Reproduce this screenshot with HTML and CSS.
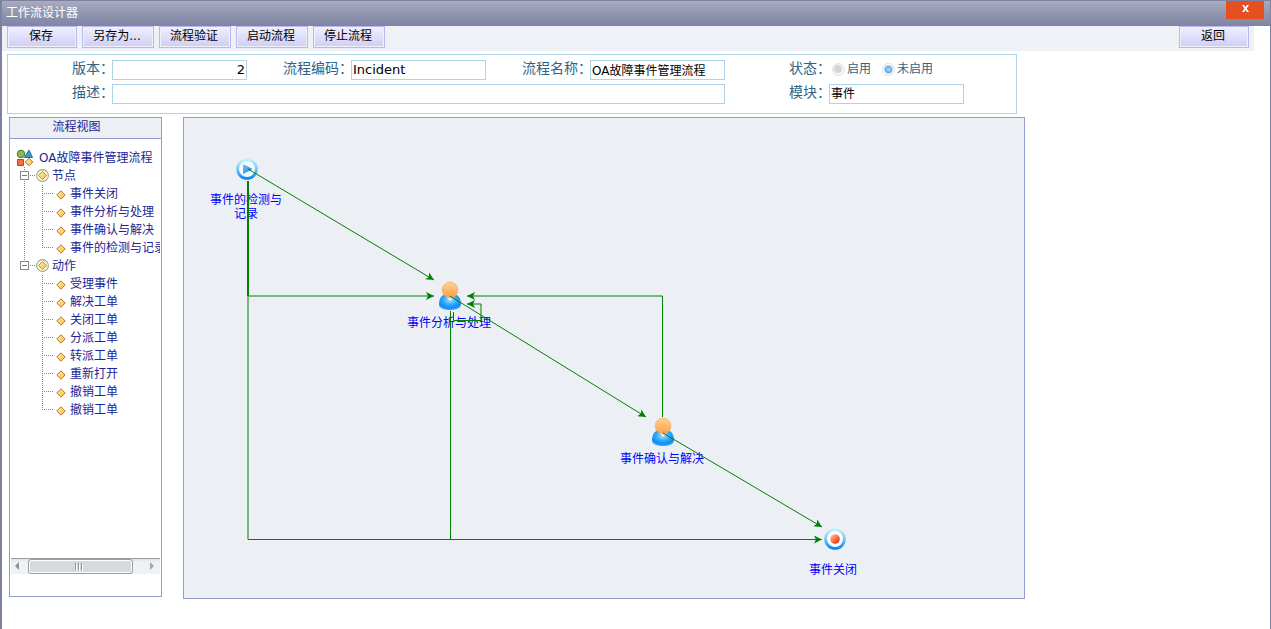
FILE: index.html
```html
<!DOCTYPE html>
<html lang="zh-CN">
<head>
<meta charset="utf-8">
<title>工作流设计器</title>
<link rel="stylesheet" href="styles.css">
</head>
<body>
<svg class="defs" aria-hidden="true">
  <defs>
    <linearGradient id="gold" x1="0" y1="0" x2="1" y2="1"><stop offset="0" stop-color="#fff0a0"/><stop offset="1" stop-color="#f8bc44"/></linearGradient>
    <linearGradient id="ring" x1="0" y1="0" x2="0" y2="1"><stop offset="0" stop-color="#c4f0fd"/><stop offset="0.5" stop-color="#74c8f8"/><stop offset="1" stop-color="#0a86f2"/></linearGradient>
    <linearGradient id="play" x1="0" y1="0" x2="1" y2="1"><stop offset="0" stop-color="#7cc8f8"/><stop offset="1" stop-color="#1378dc"/></linearGradient>
    <linearGradient id="head" x1="0" y1="0" x2="0" y2="1"><stop offset="0" stop-color="#ffd294"/><stop offset="1" stop-color="#fca044"/></linearGradient>
    <radialGradient id="torso" cx=".5" cy=".35" r=".7"><stop offset="0" stop-color="#a4dcfc"/><stop offset="0.45" stop-color="#34a8fb"/><stop offset="0.75" stop-color="#0a8cf8"/><stop offset="1" stop-color="#5cbcf8"/></radialGradient>
    <linearGradient id="stop" x1="0" y1="0" x2="1" y2="1"><stop offset="0.2" stop-color="#ffab8c"/><stop offset="0.8" stop-color="#f23c0c"/></linearGradient>
    <symbol id="i-leaf" viewBox="0 0 10 10"><path d="M5 .8 9.200 5 5 9.200.8 5Z" fill="url(#gold)" stroke="#b87434"/></symbol>
    <symbol id="i-group" viewBox="0 0 12 12"><circle cx="6" cy="6" r="5.4" fill="#fffbe0" stroke="#a3a383"/><path d="M6 2.300 9.700 6 6 9.700 2.300 6Z" fill="url(#gold)" stroke="#c07a34" stroke-width=".8"/></symbol>
    <symbol id="i-user" viewBox="0 0 24 30"><path d="M1 24c0-6 2-9 5-10.500h12c3 1.500 5 4.500 5 10.500 0 3-5 5-11 5S1 27 1 24Z" fill="url(#torso)"/><path d="M8.500 16h7L12 20Z" fill="#e8f7ff"/><circle cx="12" cy="9" r="7.900" fill="url(#head)" stroke="#f0ac64" stroke-width=".7"/></symbol>
    <symbol id="i-start" viewBox="0 0 22 22"><circle cx="11" cy="11" r="9.4" fill="#f0faff" stroke="url(#ring)" stroke-width="2.8"/><path d="M7 7.200Q7 6 8.200 6.600l7.400 3.800q1 .6 0 1.200l-7.400 3.900Q7 16 7 14.800Z" fill="url(#play)"/></symbol>
    <symbol id="i-end" viewBox="0 0 22 22"><circle cx="11" cy="11" r="9.4" fill="#f8fcff" stroke="url(#ring)" stroke-width="2.8"/><circle cx="11" cy="11" r="4.8" fill="url(#stop)"/></symbol>
  </defs>
</svg>
<div class="window">
  <header class="titlebar">
    <h1 class="title">工作流设计器</h1>
    <button class="close" type="button" aria-label="关闭"><svg width="7" height="7" viewBox="0 0 7 7"><path d="M0 0h2l1.500 2L5 0h2L4.600 3.500 7 7H5L3.500 5 2 7H0l2.400-3.500Z" fill="#fff"/></svg></button>
  </header>
  <nav class="toolbar">
    <button class="btn btn-short" type="button">保存</button>
    <button class="btn" type="button">另存为...</button>
    <button class="btn" type="button">流程验证</button>
    <button class="btn" type="button">启动流程</button>
    <button class="btn" type="button">停止流程</button>
    <button class="btn btn-short btn-back" type="button">返回</button>
  </nav>
  <form class="form">
    <label class="label" for="version">版本：</label>
    <input class="field num latin" id="version" type="text" value="2">
    <label class="label" for="code">流程编码：</label>
    <input class="field latin" id="code" type="text" value="Incident">
    <label class="label" for="name">流程名称：</label>
    <input class="field name" id="name" type="text" value="OA故障事件管理流程">
    <span class="label" id="state">状态：</span>
    <div class="radios" role="radiogroup" aria-labelledby="state">
      <label class="choice"><input class="radio" type="radio" name="state">启用</label>
      <label class="choice"><input class="radio" type="radio" name="state" checked>未启用</label>
    </div>
    <label class="label" for="desc">描述：</label>
    <input class="field wide" id="desc" type="text">
    <label class="label" for="module">模块：</label>
    <input class="field high" id="module" type="text" value="事件">
  </form>
  <main class="work">
    <aside class="panel">
      <h2 class="panel-title">流程视图</h2>
      <div class="tree">
        <a class="root" href="#"><svg class="root-icon" viewBox="0 0 18 18"><circle cx="5" cy="5" r="3.800" fill="#8cb84c" stroke="#467c34"/><path d="M13 1 16.500 8.500h-8Z" fill="#3a9cc4" stroke="#2c6ca0"/><path d="M1.500 10.500h6v6h-6Z" fill="#fc6c3c" stroke="#c83c20"/><path d="M13 9.200 16.800 13 13 16.800 9.200 13Z" fill="url(#gold)" stroke="#b87434"/></svg>OA故障事件管理流程</a>
        <ul class="groups">
          <li class="group">
            <div class="group-row"><button class="toggle" type="button" aria-label="折叠节点"></button><svg class="group-icon"><use href="#i-group"/></svg><a href="#">节点</a></div>
            <ul class="leaves">
              <li class="leaf"><svg class="leaf-icon"><use href="#i-leaf"/></svg><a href="#">事件关闭</a></li>
              <li class="leaf"><svg class="leaf-icon"><use href="#i-leaf"/></svg><a href="#">事件分析与处理</a></li>
              <li class="leaf"><svg class="leaf-icon"><use href="#i-leaf"/></svg><a href="#">事件确认与解决</a></li>
              <li class="leaf"><svg class="leaf-icon"><use href="#i-leaf"/></svg><a href="#">事件的检测与记录</a></li>
            </ul>
          </li>
          <li class="group">
            <div class="group-row"><button class="toggle" type="button" aria-label="折叠动作"></button><svg class="group-icon"><use href="#i-group"/></svg><a href="#">动作</a></div>
            <ul class="leaves">
              <li class="leaf"><svg class="leaf-icon"><use href="#i-leaf"/></svg><a href="#">受理事件</a></li>
              <li class="leaf"><svg class="leaf-icon"><use href="#i-leaf"/></svg><a href="#">解决工单</a></li>
              <li class="leaf"><svg class="leaf-icon"><use href="#i-leaf"/></svg><a href="#">关闭工单</a></li>
              <li class="leaf"><svg class="leaf-icon"><use href="#i-leaf"/></svg><a href="#">分派工单</a></li>
              <li class="leaf"><svg class="leaf-icon"><use href="#i-leaf"/></svg><a href="#">转派工单</a></li>
              <li class="leaf"><svg class="leaf-icon"><use href="#i-leaf"/></svg><a href="#">重新打开</a></li>
              <li class="leaf"><svg class="leaf-icon"><use href="#i-leaf"/></svg><a href="#">撤销工单</a></li>
              <li class="leaf"><svg class="leaf-icon"><use href="#i-leaf"/></svg><a href="#">撤销工单</a></li>
            </ul>
          </li>
        </ul>
      </div>
      <div class="scroll">
        <svg width="17" height="12" viewBox="0 0 17 12"><path d="M8 1v8L4 5Z" fill="#8c9096"/></svg>
        <div class="thumb"><svg width="9" height="8" viewBox="0 0 9 8"><path d="M.5 0v7M3.500 0v7M6.500 0v7" stroke="#90949a"/><path d="M1.500 1v7M4.500 1v7M7.500 1v7" stroke="#fff"/></svg></div>
        <svg class="scroll-right" width="17" height="12" viewBox="0 0 17 12"><path d="M7 1v8l4-4Z" fill="#a4a8ae"/></svg>
      </div>
    </aside>
    <section class="canvas">
      <div class="node node-start"><svg class="round"><use href="#i-start"/></svg><span class="node-name">事件的检测与记录</span></div>
      <div class="node node-handle"><svg class="user"><use href="#i-user"/></svg><span class="node-name">事件分析与处理</span></div>
      <div class="node node-confirm"><svg class="user"><use href="#i-user"/></svg><span class="node-name">事件确认与解决</span></div>
      <div class="node node-end"><svg class="round"><use href="#i-end"/></svg><span class="node-name">事件关闭</span></div>
      <svg class="wires" viewBox="184 118 840 480">
        <defs><marker id="arrow" markerWidth="9" markerHeight="8" refX="8" refY="4" orient="auto" markerUnits="userSpaceOnUse"><path d="M0 0 8 4 0 8 2 4Z" fill="#008000"/></marker></defs>
        <g fill="none" stroke="#008000">
          <path d="M248 169 434 280" marker-end="url(#arrow)"/>
          <path d="M248.500 181V296H434" marker-end="url(#arrow)"/>
          <path d="M247.500 181V296"/>
          <path d="M248 296V539.500H822" marker-end="url(#arrow)"/>
          <path d="M450 296 646 417" marker-end="url(#arrow)"/>
          <path d="M662.500 417V296H467" marker-end="url(#arrow)"/>
          <path d="M453.500 312V320.500H481V304H467" marker-end="url(#arrow)"/>
          <path d="M450.500 311V539.500"/>
          <path d="M663 433 822 527" marker-end="url(#arrow)"/>
        </g>
      </svg>
    </section>
  </main>
</div>
</body>
</html>
```
FILE: styles.css
```css
* { box-sizing: border-box; }

body {
  margin: 0;
  background: #fff;
  color: #000;
  font: 12px/18px "DejaVu Sans", "Noto Sans CJK SC", sans-serif;
}

button, input { font: inherit; color: inherit; }
ul { margin: 0; padding: 0; list-style: none; }
a { color: inherit; text-decoration: none; }
h1, h2 { margin: 0; font-size: 12px; font-weight: 400; }

.defs { position: absolute; width: 0; height: 0; }

.window {
  min-height: 100vh;
  border: 1px solid #7d82a3;
  border-left-width: 2px;
  border-bottom: 0;
}

.titlebar {
  display: flex;
  justify-content: space-between;
  align-items: flex-start;
  height: 25px;
  padding: 0 6px 0 4px;
  background: linear-gradient(#a9abbf, #9096ad 50%, #7f84a5);
}
.title { color: #fff; line-height: 24px; }
.close {
  display: flex;
  justify-content: center;
  width: 38px;
  height: 18px;
  padding: 4px 0 0;
  border: 0;
  background: #e64f20;
}

.toolbar {
  display: flex;
  gap: 5px;
  align-items: flex-start;
  height: 25px;
  margin-right: 16px;
  padding: 0 5px;
  background: #eef2f7;
}
.btn {
  width: 72px;
  height: 22px;
  padding: 0 2px 2px 0;
  border: 1px solid #b9b7ec;
  box-shadow: inset 0 0 0 1px #f1f1fb;
  background: linear-gradient(#eff0fb, #cfcdf6);
  line-height: 18px;
}
.btn-short { width: 70px; }
.btn-back { margin-left: auto; }

.form {
  display: grid;
  grid-template-columns: repeat(4, 104px 135px);
  gap: 4px 0;
  max-width: 1010px;
  margin: 3px 5px 0;
  padding: 5px 0 9px;
  border: 1px solid #aed2e6;
}
.label {
  justify-self: end;
  margin-right: -2px;
  color: #2c6488;
  font-size: 14px;
  line-height: 16px;
  white-space: nowrap;
}
.field {
  width: 100%;
  height: 20px;
  padding: 0 1px;
  border: 1px solid #aed2e6;
  background: #fff;
}
.latin { padding-bottom: 1px; font-size: 13px; }
.name { padding-bottom: 2px; }
.num { text-align: right; }
.wide { grid-column: span 5; }
.high { padding-bottom: 4px; }

.radios { display: flex; gap: 11px; padding-left: 3px; }
.choice { display: flex; align-items: center; gap: 2px; height: 18px; color: #2c6488; }
.radio {
  appearance: none;
  width: 13px;
  height: 13px;
  margin: 0;
  border: 1px solid #dcdcdc;
  border-radius: 50%;
  background: radial-gradient(circle at 5px 5px, #d0d2d4 0 2px, #dddddf 4px, #fff 5px);
}
.radio:checked { background: radial-gradient(circle, #9cd0f2 0 1px, #64acde 3px, #fff 5px); }

.work { display: flex; align-items: flex-start; gap: 21px; margin-top: 3px; padding-left: 7px; }

.panel {
  display: flex;
  flex: none;
  flex-direction: column;
  width: 153px;
  height: 480px;
  border: 1px solid #929ccc;
  color: #1c2494;
}
.panel-title {
  height: 21px;
  padding-right: 18px;
  border-bottom: 1px solid #929ccc;
  background: #ecf0f5;
  text-align: center;
}
.tree { flex: 1; margin-right: 1px; padding: 10px 0 0 6px; overflow: hidden; white-space: nowrap; }
.root { display: flex; align-items: center; gap: 5px; height: 18px; }
.root-icon { width: 18px; height: 18px; }
.groups { padding-left: 4px; }
.group { background: repeating-linear-gradient(#888 0 1px, transparent 1px 2px) 4px 0 / 1px 100% no-repeat; }
.group:last-child { background-size: 1px 9px; }
.group-row { display: flex; align-items: center; height: 18px; padding-bottom: 1px; }
.group-row::before {
  content: "";
  order: 1;
  width: 6px;
  height: 1px;
  margin-left: 1px;
  background: repeating-linear-gradient(90deg, #888 0 1px, transparent 1px 2px);
}
.toggle {
  width: 9px;
  height: 9px;
  padding: 0;
  border: 1px solid #888;
  background: linear-gradient(#777, #777) center / 5px 1px no-repeat #fff;
}
.group-icon { order: 2; width: 13px; height: 13px; }
.group-row a { order: 3; margin-left: 3px; }
.leaves { padding-left: 22px; }
.leaf {
  display: flex;
  align-items: center;
  height: 18px;
  background:
    repeating-linear-gradient(#888 0 1px, transparent 1px 2px) 0 0 / 1px 18px no-repeat,
    repeating-linear-gradient(90deg, #888 0 1px, transparent 1px 2px) 0 8px / 11px 1px no-repeat;
}
.leaf:last-child { background-size: 1px 9px, 11px 1px; }
.leaf-icon { flex: none; width: 10px; height: 10px; margin: 1px 4px 0 14px; }

.scroll {
  display: flex;
  align-items: center;
  height: 16px;
  margin: 0 1px 22px;
  border-top: 1px solid #9a9da2;
  background: linear-gradient(#dfe2e7, #eef1f6 3px);
}
.thumb {
  display: flex;
  justify-content: center;
  align-items: center;
  width: 105px;
  height: 15px;
  padding-right: 2px;
  border: 1px solid #999ca1;
  border-radius: 3px;
  box-shadow: inset 0 0 0 1px #fff;
  background: #d6d9de;
}
.scroll-right { margin-left: auto; }

.canvas {
  position: relative;
  flex: none;
  width: 842px;
  height: 482px;
  border: 1px solid #929ccc;
  background: #ecf0f5;
}
.wires { position: absolute; left: 0; top: 0; width: 840px; height: 480px; }
.node {
  position: absolute;
  display: flex;
  flex-direction: column;
  align-items: center;
  width: 88px;
  color: #00f;
  line-height: 14px;
  text-align: center;
}
.node-name { margin-right: 2px; }
.round { width: 22px; height: 22px; margin-bottom: 13px; }
.user { width: 24px; height: 30px; margin-bottom: 5px; }
.node-start { left: 19px; top: 40px; }
.node-start .node-name { width: 72px; }
.node-handle { left: 222px; top: 163px; }
.node-confirm { left: 435px; top: 299px; }
.node-end { left: 607px; top: 410px; }
.node-end .node-name { margin-right: 4px; }
```
